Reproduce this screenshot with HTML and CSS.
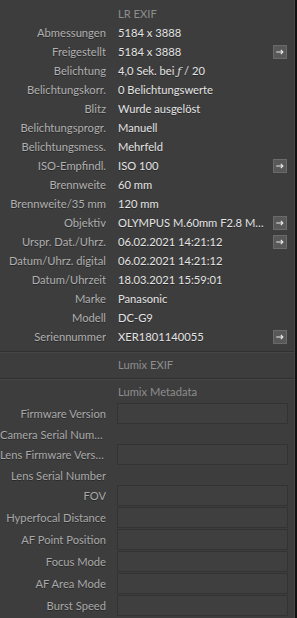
FILE: index.html
```html
<!DOCTYPE html>
<html lang="de">
<head>
<meta charset="utf-8">
<title>Metadaten</title>
<link rel="stylesheet" href="styles.css">
</head>
<body>
<div class="panel">
  <div class="title">LR EXIF</div>
  <div class="row"><span class="label">Abmessungen</span><span class="value">5184 x 3888</span></div>
  <div class="row"><span class="label">Freigestellt</span><span class="value">5184 x 3888</span><span class="btn"><svg viewBox="0 0 12 12" width="10" height="10"><path d="M1.5 6h8M7 3.5l2.5 2.5L7 8.5" fill="none" stroke="#e8e8e8" stroke-width="1.3"/></svg></span></div>
  <div class="row"><span class="label">Belichtung</span><span class="value">4,0 Sek. bei <i>ƒ</i> / 20</span></div>
  <div class="row"><span class="label">Belichtungskorr.</span><span class="value">0 Belichtungswerte</span></div>
  <div class="row"><span class="label">Blitz</span><span class="value">Wurde ausgelöst</span></div>
  <div class="row"><span class="label">Belichtungsprogr.</span><span class="value">Manuell</span></div>
  <div class="row"><span class="label">Belichtungsmess.</span><span class="value">Mehrfeld</span></div>
  <div class="row"><span class="label">ISO-Empfindl.</span><span class="value">ISO 100</span><span class="btn"><svg viewBox="0 0 12 12" width="10" height="10"><path d="M1.5 6h8M7 3.5l2.5 2.5L7 8.5" fill="none" stroke="#e8e8e8" stroke-width="1.3"/></svg></span></div>
  <div class="row"><span class="label">Brennweite</span><span class="value">60 mm</span></div>
  <div class="row"><span class="label">Brennweite/35 mm</span><span class="value">120 mm</span></div>
  <div class="row"><span class="label">Objektiv</span><span class="value">OLYMPUS M.60mm F2.8 Macro</span><span class="btn"><svg viewBox="0 0 12 12" width="10" height="10"><path d="M1.5 6h8M7 3.5l2.5 2.5L7 8.5" fill="none" stroke="#e8e8e8" stroke-width="1.3"/></svg></span></div>
  <div class="row"><span class="label">Urspr. Dat./Uhrz.</span><span class="value">06.02.2021 14:21:12</span><span class="btn"><svg viewBox="0 0 12 12" width="10" height="10"><path d="M1.5 6h8M7 3.5l2.5 2.5L7 8.5" fill="none" stroke="#e8e8e8" stroke-width="1.3"/></svg></span></div>
  <div class="row"><span class="label">Datum/Uhrz. digital</span><span class="value">06.02.2021 14:21:12</span></div>
  <div class="row"><span class="label">Datum/Uhrzeit</span><span class="value">18.03.2021 15:59:01</span></div>
  <div class="row"><span class="label">Marke</span><span class="value">Panasonic</span></div>
  <div class="row"><span class="label">Modell</span><span class="value">DC-G9</span></div>
  <div class="row"><span class="label">Seriennummer</span><span class="value">XER1801140055</span><span class="btn"><svg viewBox="0 0 12 12" width="10" height="10"><path d="M1.5 6h8M7 3.5l2.5 2.5L7 8.5" fill="none" stroke="#e8e8e8" stroke-width="1.3"/></svg></span></div>
  <div class="sep sep-first"></div>
  <div class="title">Lumix EXIF</div>
  <div class="sep"></div>
  <div class="title title-meta">Lumix Metadata</div>
  <div class="field"><span class="label">Firmware Version</span><span class="box"></span></div>
  <div class="field plain"><span class="label">Camera Serial Number</span></div>
  <div class="field"><span class="label">Lens Firmware Version</span><span class="box"></span></div>
  <div class="field plain"><span class="label">Lens Serial Number</span></div>
  <div class="field"><span class="label">FOV</span><span class="box"></span></div>
  <div class="field"><span class="label">Hyperfocal Distance</span><span class="box"></span></div>
  <div class="field"><span class="label">AF Point Position</span><span class="box"></span></div>
  <div class="field"><span class="label">Focus Mode</span><span class="box"></span></div>
  <div class="field"><span class="label">AF Area Mode</span><span class="box"></span></div>
  <div class="field"><span class="label">Burst Speed</span><span class="box"></span></div>
</div>
</body>
</html>
```

FILE: styles.css
```css
html, body {
  margin: 0;
  padding: 0;
  background: #121212;
}
body {
  width: 297px;
  height: 618px;
  overflow: hidden;
  font-family: Lato, "Open Sans", sans-serif;
  font-size: 11.2px;
}
.panel {
  width: 295px;
  height: 618px;
  background: #3d3d3d;
  border-right: 1px solid #474747;
  padding-top: 4px;
  box-sizing: border-box;
  overflow: hidden;
}
.title {
  height: 19px;
  line-height: 19px;
  padding-left: 118px;
  color: #8e8e8e;
  white-space: nowrap;
}
.row {
  display: flex;
  align-items: center;
  height: 19px;
  line-height: 19px;
}
.label {
  flex: 0 0 106px;
  width: 106px;
  text-align: right;
  color: #b0b0b0;
  white-space: nowrap;
  overflow: hidden;
  text-overflow: ellipsis;
  text-shadow: 0 1px 0 rgba(0,0,0,0.35);
}
.value {
  margin-left: 12px;
  width: 146px;
  color: #e4e4e4;
  white-space: nowrap;
  overflow: hidden;
  text-overflow: ellipsis;
  text-shadow: 0 1px 0 rgba(0,0,0,0.35);
}
.value i {
  font-family: "DejaVu Serif", serif;
  font-style: italic;
  font-size: 10.5px;
}
.btn {
  margin-left: auto;
  margin-right: 7px;
  width: 12px;
  height: 12px;
  background: #585858;
  border: 1px solid #6a6a6a;
  display: flex;
  align-items: center;
  justify-content: center;
}
.btn svg {
  display: block;
}
.sep {
  height: 1px;
  background: #303030;
  border-bottom: 1px solid #454545;
  margin-top: 4px;
  margin-bottom: 2px;
}
.sep-first {
  margin-top: 5px;
  margin-bottom: 2px;
}
.title-meta {
  margin-bottom: 2px;
}
.field {
  display: flex;
  align-items: center;
  height: 21px;
  margin-bottom: 1px;
}
.field.plain {
  height: 19px;
  margin-bottom: 0;
}
.field .label {
  color: #a9a9a9;
}
.box {
  margin-left: 11px;
  width: 171px;
  height: 21px;
  box-sizing: border-box;
  border: 1px solid #333333;
  background: #3f3f3f;
}
```
